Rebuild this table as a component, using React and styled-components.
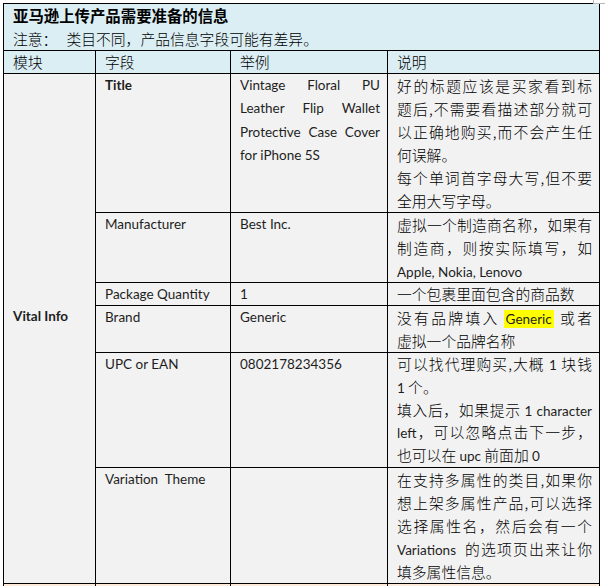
import React from "react";
import styled, { createGlobalStyle } from "styled-components";

const Global = createGlobalStyle`
  html, body { margin: 0; padding: 0; overflow: hidden; background: #ffffff; }
  body { font-family: Lato, "Noto Sans CJK SC", sans-serif; color: #000; }
`;

const Page = styled.div`
  position: relative;
  padding: 3px 0 0 3px;
`;

const Corner = styled.div`
  position: absolute;
  top: 0;
  left: 593px;
  width: 12px;
  height: 3px;
  border-left: 1px solid #b8b8b8;
  border-bottom: 1px solid #b8b8b8;
`;

const Table = styled.div`
  display: grid;
  width: max-content;
  grid-template-columns: 91px 134px 156px 211px;
  grid-template-rows: 46px 22px 138px 69px 22px 46px 114px 115px 30px;
  gap: 1px;
  background: #000;
  border: 1px solid #000;
`;

const Caption = styled.div`
  grid-column: 1 / -1;
  background: #dbeef4;
  padding: 0 9px;
  font-family: "Noto Sans CJK SC", sans-serif;
  font-size: 14.8px;
  line-height: 23px;
  font-weight: 300;
`;

const CaptionTitle = styled.div`
  font-weight: 700;
  font-size: 15.4px;
`;

const NoteLabel = styled.span`
  margin-right: 9px;
`;

const Head = styled.div`
  background: #dbeef4;
  padding: 0 8px 0 9px;
  font-family: "Noto Sans CJK SC", sans-serif;
  font-weight: 300;
  font-size: 14.8px;
  line-height: 22px;
`;

const Cell = styled.div`
  background: #f2f2f2;
  padding: 0 7px 0 9px;
  font-size: ${(p) => (p.$cjk ? "14.8px" : "13.5px")};
  font-family: ${(p) =>
    p.$cjk ? `"Noto Sans CJK SC", Lato, sans-serif` : `Lato, "Noto Sans CJK SC", sans-serif`};
  font-weight: ${(p) => (p.$bold ? 700 : p.$cjk ? 300 : 400)};
  line-height: 23.4px;
  color: ${(p) => (p.$cjk ? "#000" : "#1e1e1e")};
  overflow: hidden;
`;

const ModuleCell = styled(Cell)`
  grid-row: 3 / 9;
  display: flex;
  align-items: center;
  padding-bottom: 24px;
  font-weight: 700;
`;

const Filler = styled.div`
  background: #fdeada;
`;

const Line = styled.div`
  height: ${(p) => p.$h}px;
  line-height: ${(p) => p.$h}px;
  white-space: nowrap;
  text-align: justify;
  text-align-last: ${(p) => (p.$full ? "justify" : "left")};
`;

const Latin = styled.span`
  font-family: Lato, sans-serif;
  font-size: 13.5px;
  font-weight: 400;
  line-height: 1;
  color: #1e1e1e;
`;

const Mark = styled.span`
  font-family: Lato, sans-serif;
  font-size: 13.5px;
  font-weight: 400;
  line-height: 1;
  background: #ffff00;
  padding: 1px 2px;
  margin: 0 4px;
  color: #1e1e1e;
`;

const rows = [
  {
    field: "Title",
    bold: true,
    lh: 23.3,
    dlh: 23,
    example: [
      ["Vintage Floral PU", true],
      ["Leather Flip Wallet", true],
      ["Protective Case Cover", true],
      ["for iPhone 5S", false],
    ],
    desc: [
      ["好的标题应该是买家看到标", true],
      ["题后,不需要看描述部分就可", true],
      ["以正确地购买,而不会产生任", true],
      ["何误解。", false],
      ["每个单词首字母大写,但不要", true],
      ["全用大写字母。", false],
    ],
  },
  {
    field: "Manufacturer",
    lh: 23,
    dlh: 23,
    example: [["Best Inc.", false]],
    desc: [
      ["虚拟一个制造商名称，如果有", true],
      ["制造商，则按实际填写，如", true],
      [<Latin key="a">Apple, Nokia, Lenovo</Latin>, false],
    ],
  },
  {
    field: "Package Quantity",
    lh: 22,
    dlh: 22,
    example: [["1", false]],
    desc: [["一个包裹里面包含的商品数", false]],
  },
  {
    field: "Brand",
    lh: 23,
    dlh: 23,
    example: [["Generic", false]],
    desc: [
      [
        <React.Fragment key="b">
          没有品牌填入<Mark>Generic</Mark>或者
        </React.Fragment>,
        true,
      ],
      ["虚拟一个品牌名称", false],
    ],
  },
  {
    field: "UPC or EAN",
    lh: 22.8,
    dlh: 22.8,
    example: [["0802178234356", false]],
    desc: [
      [
        <React.Fragment key="c">
          可以找代理购买,大概 <Latin>1</Latin> 块钱
        </React.Fragment>,
        true,
      ],
      [
        <React.Fragment key="d">
          <Latin>1</Latin> 个。
        </React.Fragment>,
        false,
      ],
      [
        <React.Fragment key="e">
          填入后，如果提示 <Latin>1 character</Latin>
        </React.Fragment>,
        true,
      ],
      [
        <React.Fragment key="f">
          <Latin>left</Latin>，可以忽略点击下一步，
        </React.Fragment>,
        true,
      ],
      [
        <React.Fragment key="g">
          也可以在 <Latin>upc</Latin> 前面加 <Latin>0</Latin>
        </React.Fragment>,
        false,
      ],
    ],
  },
  {
    field: "Variation  Theme",
    lh: 23,
    dlh: 23,
    example: [],
    desc: [
      ["在支持多属性的类目,如果你", true],
      ["想上架多属性产品,可以选择", true],
      ["选择属性名，然后会有一个", true],
      [
        <React.Fragment key="h">
          <Latin>Variations</Latin>&nbsp; 的选项页出来让你
        </React.Fragment>,
        true,
      ],
      ["填多属性信息。", false],
    ],
  },
];

export default function App() {
  return (
    <Page>
      <Global />
      <Corner />
      <Table>
        <Caption>
          <CaptionTitle>亚马逊上传产品需要准备的信息</CaptionTitle>
          <div>
            <NoteLabel>注意：</NoteLabel>类目不同，产品信息字段可能有差异。
          </div>
        </Caption>
        <Head>模块</Head>
        <Head>字段</Head>
        <Head>举例</Head>
        <Head>说明</Head>
        <ModuleCell>Vital Info</ModuleCell>
        {rows.map((r) => (
          <React.Fragment key={r.field}>
            <Cell $bold={r.bold} style={{ whiteSpace: "pre" }}>
              {r.field}
            </Cell>
            <Cell>
              {r.example.map(([t, full], i) => (
                <Line key={i} $full={full} $h={r.lh}>
                  {t}
                </Line>
              ))}
            </Cell>
            <Cell $cjk>
              {r.desc.map(([t, full], i) => (
                <Line key={i} $full={full} $h={r.dlh}>
                  {t}
                </Line>
              ))}
            </Cell>
          </React.Fragment>
        ))}
        <Filler />
        <Filler />
        <Filler />
        <Filler />
      </Table>
    </Page>
  );
}
